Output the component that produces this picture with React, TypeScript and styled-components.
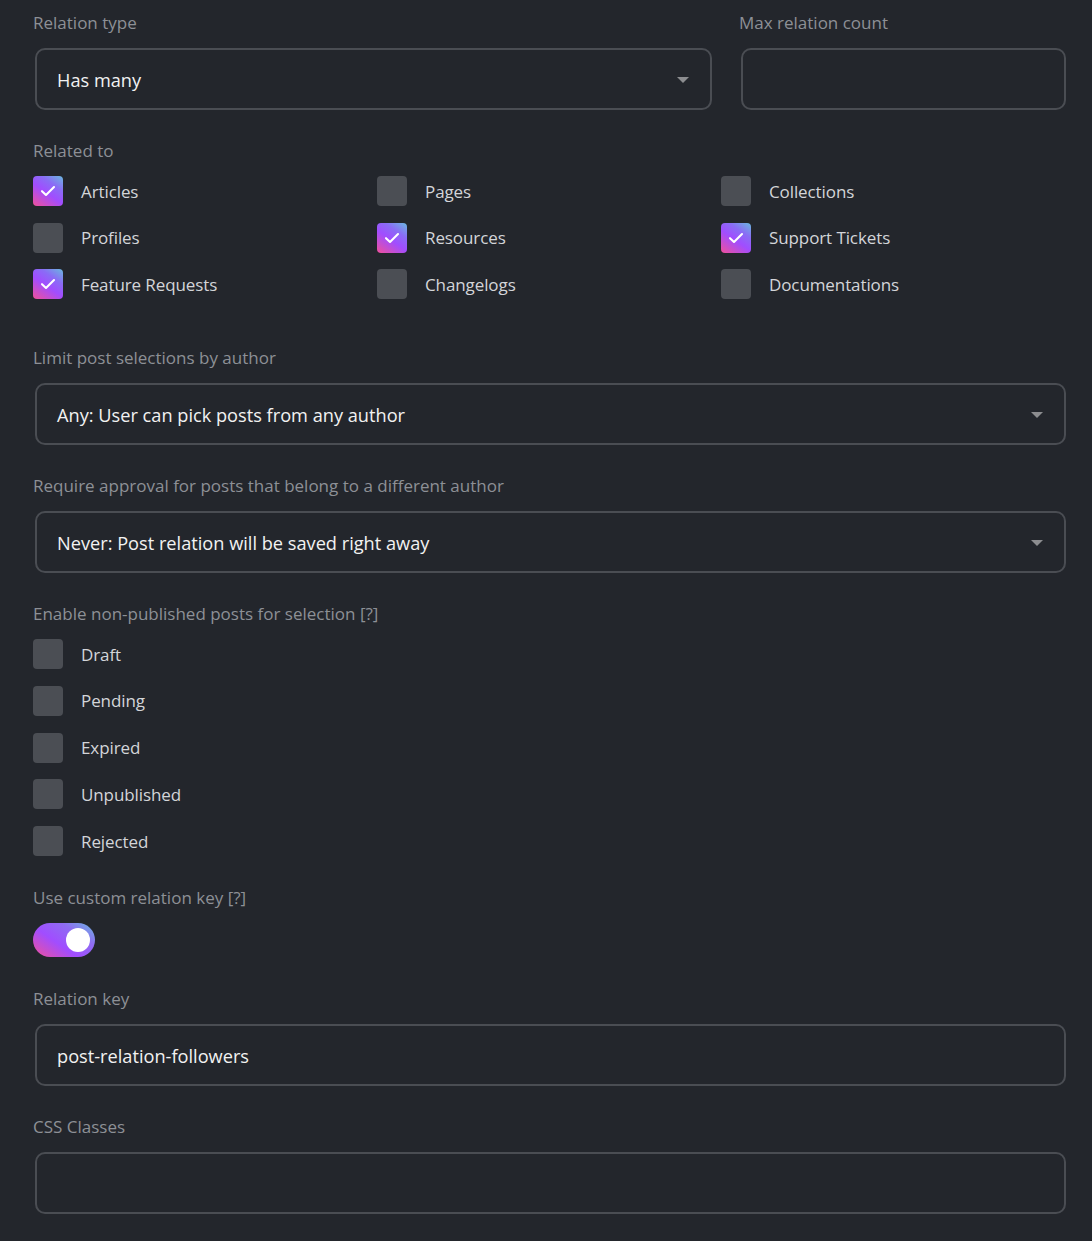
import React from "react";
import styled, { createGlobalStyle } from "styled-components";

const Global = createGlobalStyle`
  html, body { margin: 0; padding: 0; background: #23262c; }
  body { font-family: "Open Sans", "Noto Sans", sans-serif; }
  * { box-sizing: border-box; }
`;

const Page = styled.div`
  min-height: 1241px;
  background: #23262c;
  padding: 11px 26px 20px 34px;
  display: flex;
  flex-direction: column;
`;

const Field = styled.div<{ $gap?: number }>`
  display: flex;
  flex-direction: column;
  margin-bottom: ${(p) => p.$gap ?? 29}px;
`;

const Row = styled.div`
  display: grid;
  grid-template-columns: 678px 1fr;
  column-gap: 28px;
`;

const Label = styled.div`
  font-size: 17px;
  line-height: 24px;
  color: #8d9096;
  margin-bottom: 13px;
  margin-left: -1px;
`;

const Box = styled.div`
  height: 62px;
  border: 2px solid #4a4d53;
  border-radius: 10px;
  display: flex;
  align-items: center;
  padding: 1px 20px 0;
  font-size: 18.2px;
  color: #f2f2f2;
  margin-left: 1px;
`;

const Value = styled.span`
  flex: 1;
`;

const Caret = styled.span`
  width: 0;
  height: 0;
  border-left: 6px solid transparent;
  border-right: 6px solid transparent;
  border-top: 6px solid #8c8d90;
  margin-right: 1px;
`;

const CheckGrid = styled.div<{ $cols: number; $rowGap: number }>`
  display: grid;
  grid-template-columns: repeat(${(p) => p.$cols}, 344px);
  row-gap: ${(p) => p.$rowGap}px;
  margin-left: -1px;
`;

const CheckItem = styled.label`
  display: flex;
  align-items: center;
  gap: 18px;
  font-size: 17px;
  color: #d3d5d9;
  letter-spacing: -0.1px;
  height: 30px;
`;

const Square = styled.span<{ $on: boolean }>`
  width: 30px;
  height: 30px;
  border-radius: 4px;
  flex: none;
  display: flex;
  align-items: center;
  justify-content: center;
  background: ${(p) =>
    p.$on
      ? "linear-gradient(35deg, #f0509a 0%, #a14dff 45%, #8a6cf5 70%, #6ab9e0 100%)"
      : "#4b4e54"};
`;

const Toggle = styled.div`
  width: 62px;
  height: 34px;
  border-radius: 17px;
  background: linear-gradient(35deg, #f0509a 0%, #a14dff 40%, #8f6cf2 70%, #6ab9e0 100%);
  display: flex;
  align-items: center;
  justify-content: flex-end;
  padding-right: 5px;
  margin-left: -1px;
`;

const Knob = styled.span`
  width: 24px;
  height: 24px;
  border-radius: 50%;
  background: #ffffff;
`;

const Check = () => (
  <svg width="16" height="12" viewBox="0 0 16 12" fill="none">
    <path d="M2 6.2 L6 10 L14 2" stroke="#fff" strokeWidth="2.1" strokeLinecap="round" strokeLinejoin="round" />
  </svg>
);

const CheckBox = ({ label, on }: { label: string; on?: boolean }) => (
  <CheckItem>
    <Square $on={!!on}>{on && <Check />}</Square>
    {label}
  </CheckItem>
);

export default function App() {
  return (
    <>
      <Global />
      <Page>
        <Row>
          <Field>
            <Label>Relation type</Label>
            <Box>
              <Value>Has many</Value>
              <Caret />
            </Box>
          </Field>
          <Field>
            <Label>Max relation count</Label>
            <Box />
          </Field>
        </Row>

        <Field $gap={47}>
          <Label>Related to</Label>
          <CheckGrid $cols={3} $rowGap={16.5}>
            <CheckBox label="Articles" on />
            <CheckBox label="Pages" />
            <CheckBox label="Collections" />
            <CheckBox label="Profiles" />
            <CheckBox label="Resources" on />
            <CheckBox label="Support Tickets" on />
            <CheckBox label="Feature Requests" on />
            <CheckBox label="Changelogs" />
            <CheckBox label="Documentations" />
          </CheckGrid>
        </Field>

        <Field>
          <Label>Limit post selections by author</Label>
          <Box>
            <Value>Any: User can pick posts from any author</Value>
            <Caret />
          </Box>
        </Field>

        <Field>
          <Label>Require approval for posts that belong to a different author</Label>
          <Box>
            <Value>Never: Post relation will be saved right away</Value>
            <Caret />
          </Box>
        </Field>

        <Field $gap={30}>
          <Label>Enable non-published posts for selection [?]</Label>
          <CheckGrid $cols={1} $rowGap={16.75}>
            <CheckBox label="Draft" />
            <CheckBox label="Pending" />
            <CheckBox label="Expired" />
            <CheckBox label="Unpublished" />
            <CheckBox label="Rejected" />
          </CheckGrid>
        </Field>

        <Field $gap={30}>
          <Label>Use custom relation key [?]</Label>
          <Toggle>
            <Knob />
          </Toggle>
        </Field>

        <Field>
          <Label>Relation key</Label>
          <Box>
            <Value>post-relation-followers</Value>
          </Box>
        </Field>

        <Field>
          <Label>CSS Classes</Label>
          <Box />
        </Field>
      </Page>
    </>
  );
}
